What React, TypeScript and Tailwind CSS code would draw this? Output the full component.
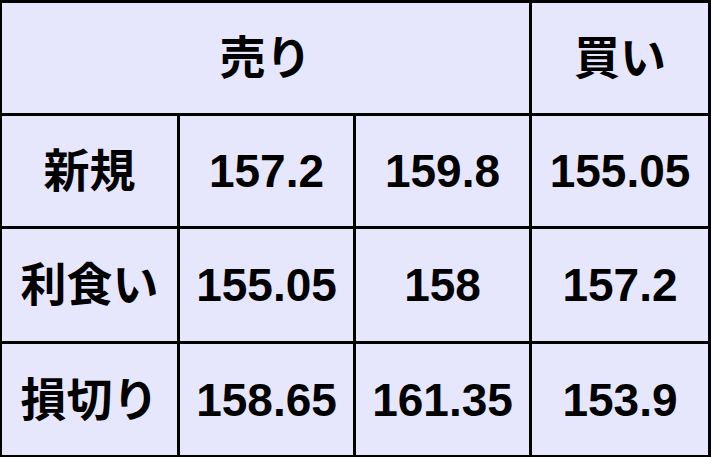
import React from "react";

const rows: [string, string, string, string][] = [
  ["新規", "157.2", "159.8", "155.05"],
  ["利食い", "155.05", "158", "157.2"],
  ["損切り", "158.65", "161.35", "153.9"],
];

function Cell({ children, className = "" }: { children: React.ReactNode; className?: string }) {
  return (
    <div
      className={`flex items-center justify-center bg-[#e6e6fc] text-black font-bold text-[46px] leading-none whitespace-nowrap ${className}`}
    >
      {children}
    </div>
  );
}

export default function App() {
  return (
    <div
      className="w-[711px] h-[457px] bg-black pt-[3px] pl-[2px] pr-[2px] pb-[2px] grid grid-cols-[175px_173px_173px_176px] grid-rows-[110px_110px_112px_111px] gap-[3px]"
      style={{ fontFamily: '"Liberation Sans", "Noto Sans CJK JP", sans-serif' }}
    >
      <Cell className="col-span-3">売り</Cell>
      <Cell>買い</Cell>
      {rows.map((r) =>
        r.map((v, i) => <Cell key={r[0] + i}>{v}</Cell>)
      )}
    </div>
  );
}
